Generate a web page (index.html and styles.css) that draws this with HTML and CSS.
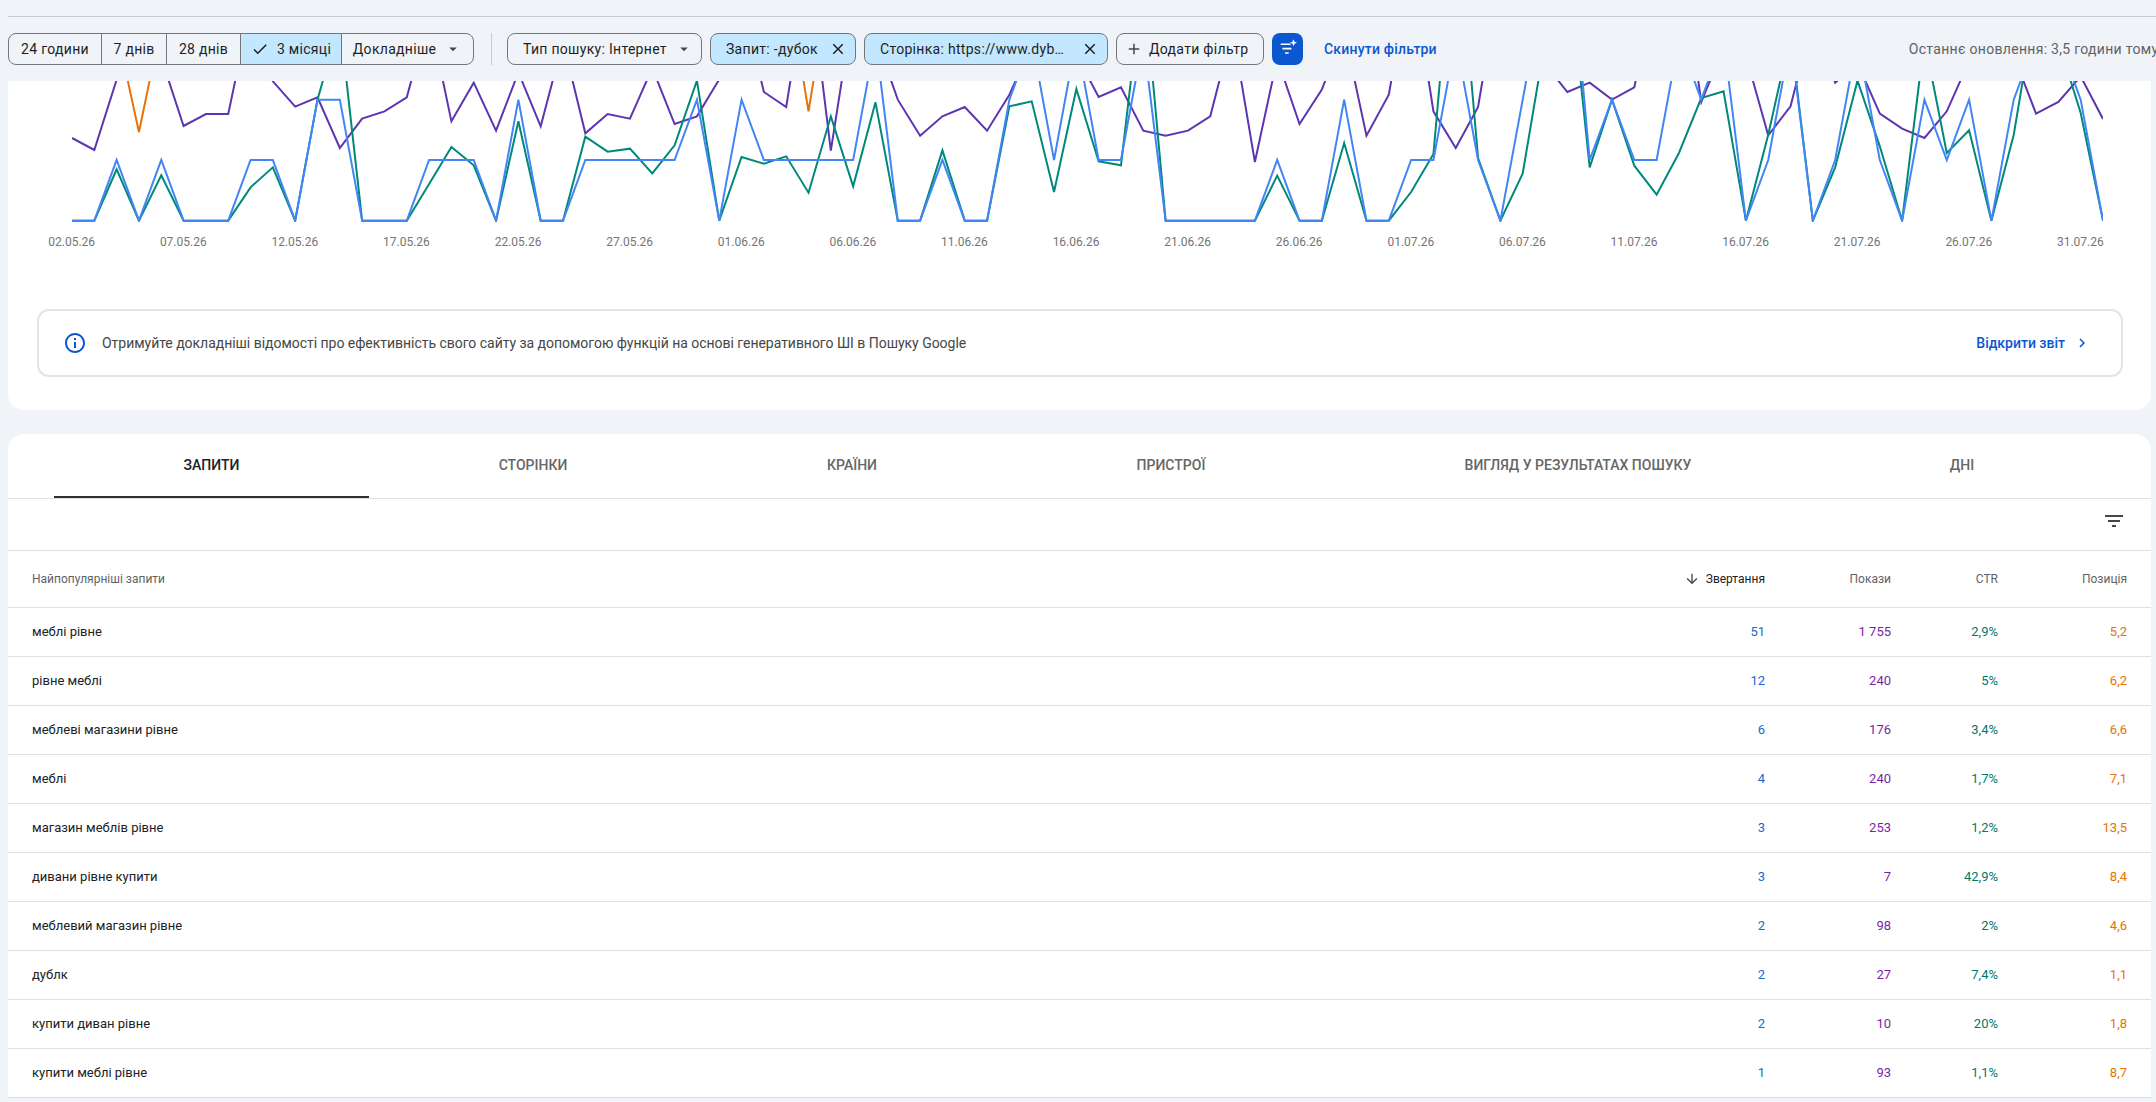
FILE: index.html
```html
<!DOCTYPE html>
<html lang="uk">
<head>
  <meta charset="UTF-8">
  <title>Ефективність</title>
  <link rel="stylesheet" href="styles.css">
</head>
<body>

<div class="toolbar">
  <div class="toolbar-rule"></div>
  <div class="toolbar-row">
    <div class="range-group">
      <button class="range range-24">24 години</button>
      <button class="range range-7">7 днів</button>
      <button class="range range-28">28 днів</button>
      <button class="range range-3m selected">
        <svg class="icon-18" viewBox="0 0 24 24"><path d="M9 16.17L4.83 12l-1.42 1.41L9 19 21 7l-1.41-1.41z"/></svg>
        3 місяці
      </button>
      <button class="range range-more">
        Докладніше
        <svg class="icon-18 muted" viewBox="0 0 24 24"><path d="M7 10l5 5 5-5z"/></svg>
      </button>
    </div>
    <div class="toolbar-sep"></div>
    <button class="chip chip-type">
      Тип пошуку: Інтернет
      <svg class="icon-18 muted" viewBox="0 0 24 24"><path d="M7 10l5 5 5-5z"/></svg>
    </button>
    <button class="chip chip-query selected">
      Запит: -дубок
      <svg class="icon-18" viewBox="0 0 24 24"><path d="M19 6.41L17.59 5 12 10.59 6.41 5 5 6.41 10.59 12 5 17.59 6.41 19 12 13.41 17.59 19 19 17.59 13.41 12z"/></svg>
    </button>
    <button class="chip chip-page selected">
      Сторінка: https://www.dyb…
      <svg class="icon-18" viewBox="0 0 24 24"><path d="M19 6.41L17.59 5 12 10.59 6.41 5 5 6.41 10.59 12 5 17.59 6.41 19 12 13.41 17.59 19 19 17.59 13.41 12z"/></svg>
    </button>
    <button class="chip chip-add">
      <svg class="icon-18 muted" viewBox="0 0 24 24"><path d="M19 13h-6v6h-2v-6H5v-2h6V5h2v6h6v2z"/></svg>
      Додати фільтр
    </button>
    <button class="spark-button">
      <svg class="icon-20" viewBox="0 0 20 20"><path d="M2.700 4.400h9.800V6H2.700zM4.400 8.800h9v1.600h-9zM7 13.200h3.700v1.600H7z"/><path d="M15.500.2l1 2.500 2.500 1-2.500 1-1 2.500-1-2.500-2.500-1 2.500-1z"/></svg>
    </button>
    <a class="reset-link">Скинути фільтри</a>
    <span class="last-update">Останнє оновлення: 3,5 години тому</span>
  </div>
</div>

<div class="card chart-card">
  <svg class="chart" viewBox="0 9 91 423" preserveAspectRatio="none">
    <polyline class="line line-orange" points="2,-145 3,162 4,-160 32,-310 33,100 34,-310"/>
    <polyline class="line line-purple" points="0,180 1,216 2,5 3,-100 4,-60 5,144 6,108 7,108 8,-210 9,10 10,86 11,58 12,210 13,122 14,100 15,58 16,-190 17,130 18,14 19,158 20,-17 21,145 22,-110 23,166 24,108 25,122 26,-30 27,138 28,115 29,4 30,-240 31,42 32,87 33,-330 34,218 35,-210 36,-126 37,65 38,173 39,115 40,87 41,158 42,50 43,-100 44,-100 45,-70 46,57 47,28 48,158 49,173 50,158 51,115 52,-145 53,252 54,-58 55,138 56,35 57,-140 58,173 59,50 60,-330 61,100 62,210 63,87 64,-315 65,-200 66,-42 67,42 68,14 69,65 70,28 71,-300 72,-400 73,72 74,-90 75,-67 76,172 77,85 78,-180 79,14 80,-45 81,107 82,152 83,180 84,100 85,-50 86,-100 87,-67 88,107 89,72 90,-5 91,123"/>
    <polyline class="line line-teal" points="0,428 1,428 2,274 3,428 4,292 5,428 6,428 7,428 8,328 9,268 10,428 11,65 12,-170 13,428 14,428 15,428 16,318 17,207 18,262 19,428 20,130 21,428 22,428 23,176 24,221 25,212 26,286 27,202 28,8 29,428 30,237 31,257 32,235 33,344 34,115 35,325 36,73 37,428 38,428 39,217 40,428 41,428 42,85 43,70 44,342 45,33 46,250 47,262 48,-310 49,428 50,428 51,428 52,428 53,428 54,293 55,428 56,428 57,195 58,428 59,428 60,342 61,228 62,-530 63,240 64,428 65,286 66,-110 67,-375 68,268 69,65 70,263 71,350 72,225 73,60 74,40 75,428 76,170 77,-130 78,428 79,268 80,8 81,205 82,428 83,-115 84,225 85,157 86,428 87,170 88,-230 89,-110 90,105 91,428"/>
    <polyline class="line line-blue" points="0,428 1,428 2,246 3,428 4,246 5,428 6,428 7,428 8,246 9,246 10,428 11,65 12,65 13,428 14,428 15,428 16,246 17,246 18,246 19,428 20,65 21,428 22,428 23,246 24,246 25,246 26,246 27,246 28,65 29,428 30,65 31,246 32,246 33,246 34,246 35,246 36,-117 37,428 38,428 39,246 40,428 41,428 42,65 43,-117 44,246 45,-117 46,246 47,246 48,-117 49,428 50,428 51,428 52,428 53,428 54,246 55,428 56,428 57,65 58,428 59,428 60,246 61,246 62,-117 63,246 64,428 65,65 66,-300 67,-500 68,246 69,65 70,246 71,246 72,-117 73,65 74,-117 75,428 76,246 77,-117 78,428 79,246 80,-117 81,246 82,428 83,65 84,246 85,65 86,428 87,65 88,-117 89,-117 90,65 91,428"/>
  </svg>
  <div class="chart-dates">
    <span>02.05.26</span><span>07.05.26</span><span>12.05.26</span><span>17.05.26</span><span>22.05.26</span>
    <span>27.05.26</span><span>01.06.26</span><span>06.06.26</span><span>11.06.26</span><span>16.06.26</span>
    <span>21.06.26</span><span>26.06.26</span><span>01.07.26</span><span>06.07.26</span><span>11.07.26</span>
    <span>16.07.26</span><span>21.07.26</span><span>26.07.26</span><span>31.07.26</span>
  </div>
  <div class="banner">
    <svg class="icon-24 link-icon" viewBox="0 0 24 24"><path d="M11 7h2v2h-2zm0 4h2v6h-2zm1-9C6.480 2 2 6.480 2 12s4.480 10 10 10 10-4.480 10-10S17.520 2 12 2zm0 18c-4.410 0-8-3.590-8-8s3.590-8 8-8 8 3.590 8 8-3.590 8-8 8z"/></svg>
    <span class="banner-text">Отримуйте докладніші відомості про ефективність свого сайту за допомогою функцій на основі генеративного ШІ в Пошуку Google</span>
    <a class="banner-link">Відкрити звіт</a>
    <svg class="icon-18 link-icon" viewBox="0 0 24 24"><path d="M10 6L8.590 7.410 13.170 12l-4.580 4.590L10 18l6-6z"/></svg>
  </div>
</div>

<div class="card table-card">
  <div class="tabs">
    <div class="tab active">Запити</div>
    <div class="tab">Сторінки</div>
    <div class="tab">Країни</div>
    <div class="tab">Пристрої</div>
    <div class="tab">Вигляд у результатах пошуку</div>
    <div class="tab">Дні</div>
  </div>
  <div class="table-filter">
    <svg class="icon-24 dark" viewBox="0 0 24 24"><path d="M10 18h4v-2h-4v2zM3 6v2h18V6H3zm3 7h12v-2H6v2z"/></svg>
  </div>
  <div class="row head">
    <div>Найпопулярніші запити</div>
    <div class="num sorted">
      <svg class="icon-16 dark" viewBox="0 0 24 24"><path d="M20 12l-1.410-1.410L13 16.170V4h-2v12.170l-5.580-5.590L4 12l8 8 8-8z"/></svg>
      Звертання
    </div>
    <div class="num">Покази</div>
    <div class="num">CTR</div>
    <div class="num">Позиція</div>
  </div>
  <div class="row"><div>меблі рівне</div><div class="num clicks">51</div><div class="num shows">1 755</div><div class="num ctr">2,9%</div><div class="num pos">5,2</div></div>
  <div class="row"><div>рівне меблі</div><div class="num clicks">12</div><div class="num shows">240</div><div class="num ctr">5%</div><div class="num pos">6,2</div></div>
  <div class="row"><div>меблеві магазини рівне</div><div class="num clicks">6</div><div class="num shows">176</div><div class="num ctr">3,4%</div><div class="num pos">6,6</div></div>
  <div class="row"><div>меблі</div><div class="num clicks">4</div><div class="num shows">240</div><div class="num ctr">1,7%</div><div class="num pos">7,1</div></div>
  <div class="row"><div>магазин меблів рівне</div><div class="num clicks">3</div><div class="num shows">253</div><div class="num ctr">1,2%</div><div class="num pos">13,5</div></div>
  <div class="row"><div>дивани рівне купити</div><div class="num clicks">3</div><div class="num shows">7</div><div class="num ctr">42,9%</div><div class="num pos">8,4</div></div>
  <div class="row"><div>меблевий магазин рівне</div><div class="num clicks">2</div><div class="num shows">98</div><div class="num ctr">2%</div><div class="num pos">4,6</div></div>
  <div class="row"><div>дублк</div><div class="num clicks">2</div><div class="num shows">27</div><div class="num ctr">7,4%</div><div class="num pos">1,1</div></div>
  <div class="row"><div>купити диван рівне</div><div class="num clicks">2</div><div class="num shows">10</div><div class="num ctr">20%</div><div class="num pos">1,8</div></div>
  <div class="row"><div>купити меблі рівне</div><div class="num clicks">1</div><div class="num shows">93</div><div class="num ctr">1,1%</div><div class="num pos">8,7</div></div>
</div>

</body>
</html>
```

FILE: styles.css
```css
html, body {
  margin: 0;
  height: 1102px;
  overflow: hidden;
}
body {
  background: #f0f4f9;
  font-family: Roboto, "Noto Sans", sans-serif;
  color: #1f1f1f;
}
svg {
  fill: currentColor;
  display: block;
  flex-shrink: 0;
}
.icon-16 { width: 16px; height: 16px; }
.icon-18 { width: 18px; height: 18px; }
.icon-20 { width: 20px; height: 20px; }
.icon-24 { width: 24px; height: 24px; }
.muted { color: #444746; }
.dark { color: #444746; }
.link-icon { color: #0b57d0; }

/* Верхня панель */
.toolbar {
  height: 81px;
  box-sizing: border-box;
  padding: 16px 0 0 8px;
}
.toolbar-rule {
  height: 1px;
  background: #c7cbce;
  margin-bottom: 16px;
}
.toolbar-row {
  display: flex;
  align-items: center;
  height: 32px;
  white-space: nowrap;
  font-size: 14px;
  letter-spacing: 0.3px;
}
.toolbar-row > * {
  flex-shrink: 0;
}
button {
  font: inherit;
  letter-spacing: inherit;
  color: #1f1f1f;
  background: none;
  box-sizing: border-box;
  height: 32px;
  display: flex;
  align-items: center;
  padding: 0;
  white-space: nowrap;
}
.selected { background: #c2e7ff; }
.range-group {
  display: flex;
  width: 466px;
  height: 32px;
  box-sizing: border-box;
  border: 1px solid #747775;
  border-radius: 8px;
  overflow: hidden;
}
.range {
  height: 30px;
  border: 0;
  border-right: 1px solid #747775;
  justify-content: center;
  gap: 8px;
}
.range-24 { width: 93px; }
.range-7 { width: 65px; }
.range-28 { width: 74px; }
.range-3m { width: 101px; }
.range-more { flex: 1; border-right: 0; gap: 8px; }
.toolbar-sep {
  width: 1px;
  height: 32px;
  background: #c7cbce;
  margin: 0 15px 0 17px;
}
.chip {
  border: 1px solid #747775;
  border-radius: 8px;
  margin-right: 8px;
  justify-content: space-between;
  padding: 0 8px 0 15px;
}
.chip-type { width: 195px; }
.chip-query { width: 146px; }
.chip-page { width: 244px; }
.chip-add {
  width: 148px;
  padding: 0 12px 0 8px;
  gap: 6px;
  justify-content: flex-start;
}
.spark-button {
  width: 31px;
  border: 0;
  border-radius: 8px;
  background: #0b57d0;
  color: #fff;
  justify-content: center;
}
.reset-link {
  color: #0b57d0;
  font-weight: 500;
  letter-spacing: 0.2px;
  margin-left: 21px;
}
.last-update {
  color: #5f6368;
  margin-left: 472px;
}

/* Картки */
.card {
  background: #fff;
  margin: 0 5px 0 8px;
  overflow: hidden;
}
.chart-card {
  height: 329px;
  border-radius: 0 0 16px 16px;
}
.chart {
  width: 2031px;
  height: 141px;
  margin-left: 63.7px;
}
.line {
  fill: none;
  stroke-width: 2;
  vector-effect: non-scaling-stroke;
}
.line-orange { stroke: #e8710a; }
.line-purple { stroke: #5e35b1; }
.line-teal { stroke: #00897b; }
.line-blue { stroke: #4285f4; }
.chart-dates {
  display: grid;
  grid-template-columns: repeat(19, 111.6px);
  padding-left: 7.9px;
  margin-top: 12px;
  font-size: 12px;
  line-height: 16px;
  color: #757575;
  text-align: center;
}
.banner {
  display: flex;
  align-items: center;
  height: 68px;
  box-sizing: border-box;
  margin: 59px 28px 0 29px;
  padding: 0 30px 0 24px;
  border: 2px solid #e0e4ee;
  border-radius: 12px;
  font-size: 14px;
}
.banner-text {
  color: #444746;
  margin-left: 15px;
  letter-spacing: -0.03px;
  flex: 1;
}
.banner-link {
  color: #0b57d0;
  font-weight: 500;
  margin-right: 8px;
}

/* Таблиця */
.table-card {
  margin-top: 24px;
  border-radius: 16px 16px 0 0;
}
.tabs {
  display: grid;
  grid-template-columns: 315px 328px 310px 328px 486px 282px;
  height: 65px;
  box-sizing: border-box;
  padding-left: 46px;
  border-bottom: 1px solid #e0e0e0;
}
.tab {
  height: 64px;
  box-sizing: border-box;
  display: flex;
  align-items: center;
  justify-content: center;
  border-bottom: 2px solid transparent;
  font-size: 14px;
  font-weight: 500;
  text-transform: uppercase;
  color: #666;
}
.tab.active {
  color: #202124;
  border-bottom-color: #303030;
}
.table-filter {
  height: 52px;
  box-sizing: border-box;
  display: flex;
  justify-content: flex-end;
  align-items: center;
  padding: 0 25px 7px 0;
  border-bottom: 1px solid #e0e0e0;
}
.row {
  display: grid;
  grid-template-columns: 1fr 100px 126px 107px 129px;
  align-items: center;
  height: 49px;
  box-sizing: border-box;
  padding: 0 24px 2px;
  border-bottom: 1px solid #e0e0e0;
  font-size: 13px;
  color: #202124;
}
.row.head {
  height: 57px;
  padding-bottom: 0;
  font-size: 12px;
  color: #5f6368;
}
.num {
  text-align: right;
}
.sorted {
  display: flex;
  justify-content: flex-end;
  align-items: center;
  gap: 6px;
  color: #202124;
}
.clicks { color: #1967d2; }
.shows { color: #7b1fa2; }
.ctr { color: #00796b; }
.pos { color: #e37400; }
```
